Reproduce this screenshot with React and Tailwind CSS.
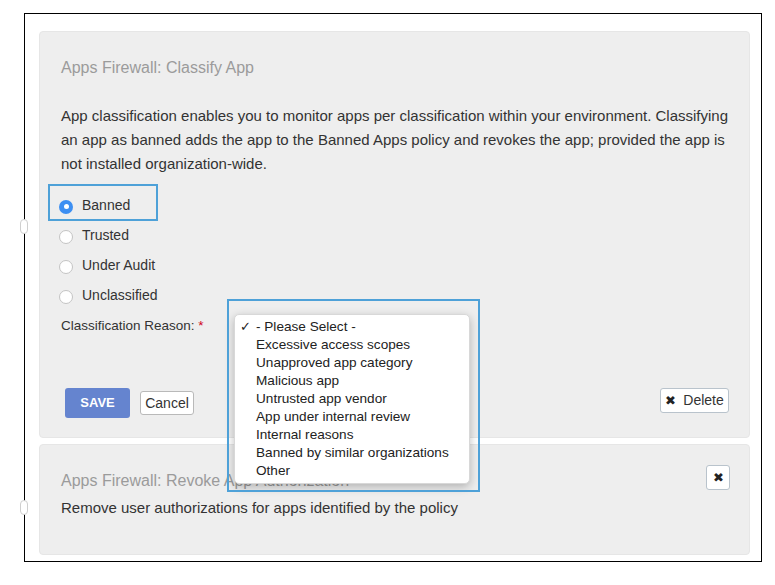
import { useState } from 'react';

const OPTIONS = [
  'Banned',
  'Trusted',
  'Under Audit',
  'Unclassified',
];

const REASONS = [
  '- Please Select -',
  'Excessive access scopes',
  'Unapproved app category',
  'Malicious app',
  'Untrusted app vendor',
  'App under internal review',
  'Internal reasons',
  'Banned by similar organizations',
  'Other',
];

function Radio({ checked }) {
  return checked ? (
    <span className="block w-[14px] h-[14px] rounded-full bg-[#3d8ff2] flex items-center justify-center shrink-0">
      <span className="block w-[5px] h-[5px] rounded-full bg-white" />
    </span>
  ) : (
    <span className="block w-[14px] h-[14px] rounded-full bg-white border border-[#c4c4c4] shrink-0" />
  );
}

export default function App() {
  const [value, setValue] = useState('Banned');

  return (
    <div className="w-[775px] h-[585px] bg-white pt-[13px] pl-[24px] font-['Liberation_Sans',Arial,sans-serif]">
      <div className="relative w-[738px] h-[549px] border border-black pt-[17px] pl-[14px]">
        {/* side handles */}
        <span className="absolute left-[-5px] top-[205px] w-[8px] h-[15px] rounded-full border border-[#cfcfcf] bg-white" />
        <span className="absolute left-[-5px] top-[486px] w-[8px] h-[15px] rounded-full border border-[#cfcfcf] bg-white" />

        {/* Classify card */}
        <div className="relative w-[711px] h-[407px] rounded-[4px] bg-[#eeeeee] border border-[#e6e6e6] pt-[26px] pl-[21px] pr-[20px]">
          <h2 className="text-[16px] leading-[20px] text-[#9b9b9b]">Apps Firewall: Classify App</h2>
          <p className="mt-[26px] text-[15px] leading-[24px] text-[#333]">
            App classification enables you to monitor apps per classification within your environment. Classifying<br />
            an app as banned adds the app to the Banned Apps policy and revokes the app; provided the app is<br />
            not installed organization-wide.
          </p>

          <div className="mt-[14px] flex flex-col">
            {OPTIONS.map(o => (
              <button key={o} onClick={() => setValue(o)}
                className="h-[30px] flex items-center gap-[9px] text-[14px] text-[#333] text-left">
                <span className="block mt-[3px] ml-[-2px]"><Radio checked={value === o} /></span>
                <span>{o}</span>
              </button>
            ))}
          </div>

          <div className="h-[31px] flex items-center text-[13.5px] text-[#333]">
            <span className="mt-[1px]">Classification Reason: <span className="text-[#d0021b]">*</span></span>
            <div className="ml-[46px] mt-[3px] w-[199px] h-[26px] rounded-[5px] border-2 border-[#3b7fd9] bg-white" />
          </div>

          <div className="mt-[47px] flex items-start justify-between">
            <div className="ml-[4px] flex items-start gap-[10px]">
              <button className="w-[65px] h-[30px] rounded-[3px] bg-[#6584cf] text-white text-[13px] font-bold">SAVE</button>
              <button className="mt-[3px] w-[54px] h-[24px] rounded-[3px] bg-white border border-[#b9b9b9] text-[14px] text-[#333]">Cancel</button>
            </div>
            <button className="w-[69px] h-[25px] rounded-[3px] bg-white border border-[#b9c3cc] text-[14px] text-[#333] flex items-center justify-center gap-[7px]">
              <span className="text-[13px] text-[#222]">✖</span>Delete
            </button>
          </div>
        </div>

        {/* Revoke card */}
        <div className="mt-[6px] w-[711px] h-[111px] rounded-[4px] bg-[#eeeeee] border border-[#e6e6e6] pl-[21px] pr-[19px]">
          <div className="flex items-start justify-between">
            <h2 className="mt-[26px] text-[16px] leading-[20px] text-[#9b9b9b]">Apps Firewall: Revoke App Authorization</h2>
            <button className="mt-[20px] w-[24px] h-[25px] rounded-[3px] bg-white border border-[#b9c3cc] text-[13px] text-[#222] flex items-center justify-center">✖</button>
          </div>
          <p className="mt-[5px] text-[15px] leading-[24px] text-[#333]">Remove user authorizations for apps identified by the policy</p>
        </div>

        {/* highlight around Banned */}
        <div className="absolute left-[23px] top-[170px] w-[110px] h-[37px] border-2 border-[#4ea1d8]" />

        {/* dropdown menu */}
        <div className="absolute left-[209px] top-[300px] w-[236px] h-[170px] rounded-[5px] bg-white shadow-[0_3px_10px_rgba(0,0,0,0.25)] border border-[#d8d8d8] pt-[3px] text-[13.6px] text-[#222]">
          {REASONS.map((r, i) => (
            <div key={r} className="h-[18px] leading-[18px] flex items-center">
              <span className="w-[21px] pl-[5px] text-[13px]">{i === 0 ? '✓' : ''}</span>
              <span>{r}</span>
            </div>
          ))}
        </div>

        {/* highlight around dropdown */}
        <div className="absolute left-[202px] top-[285px] w-[253px] h-[193px] border-2 border-[#4ea1d8]" />
      </div>
    </div>
  );
}
